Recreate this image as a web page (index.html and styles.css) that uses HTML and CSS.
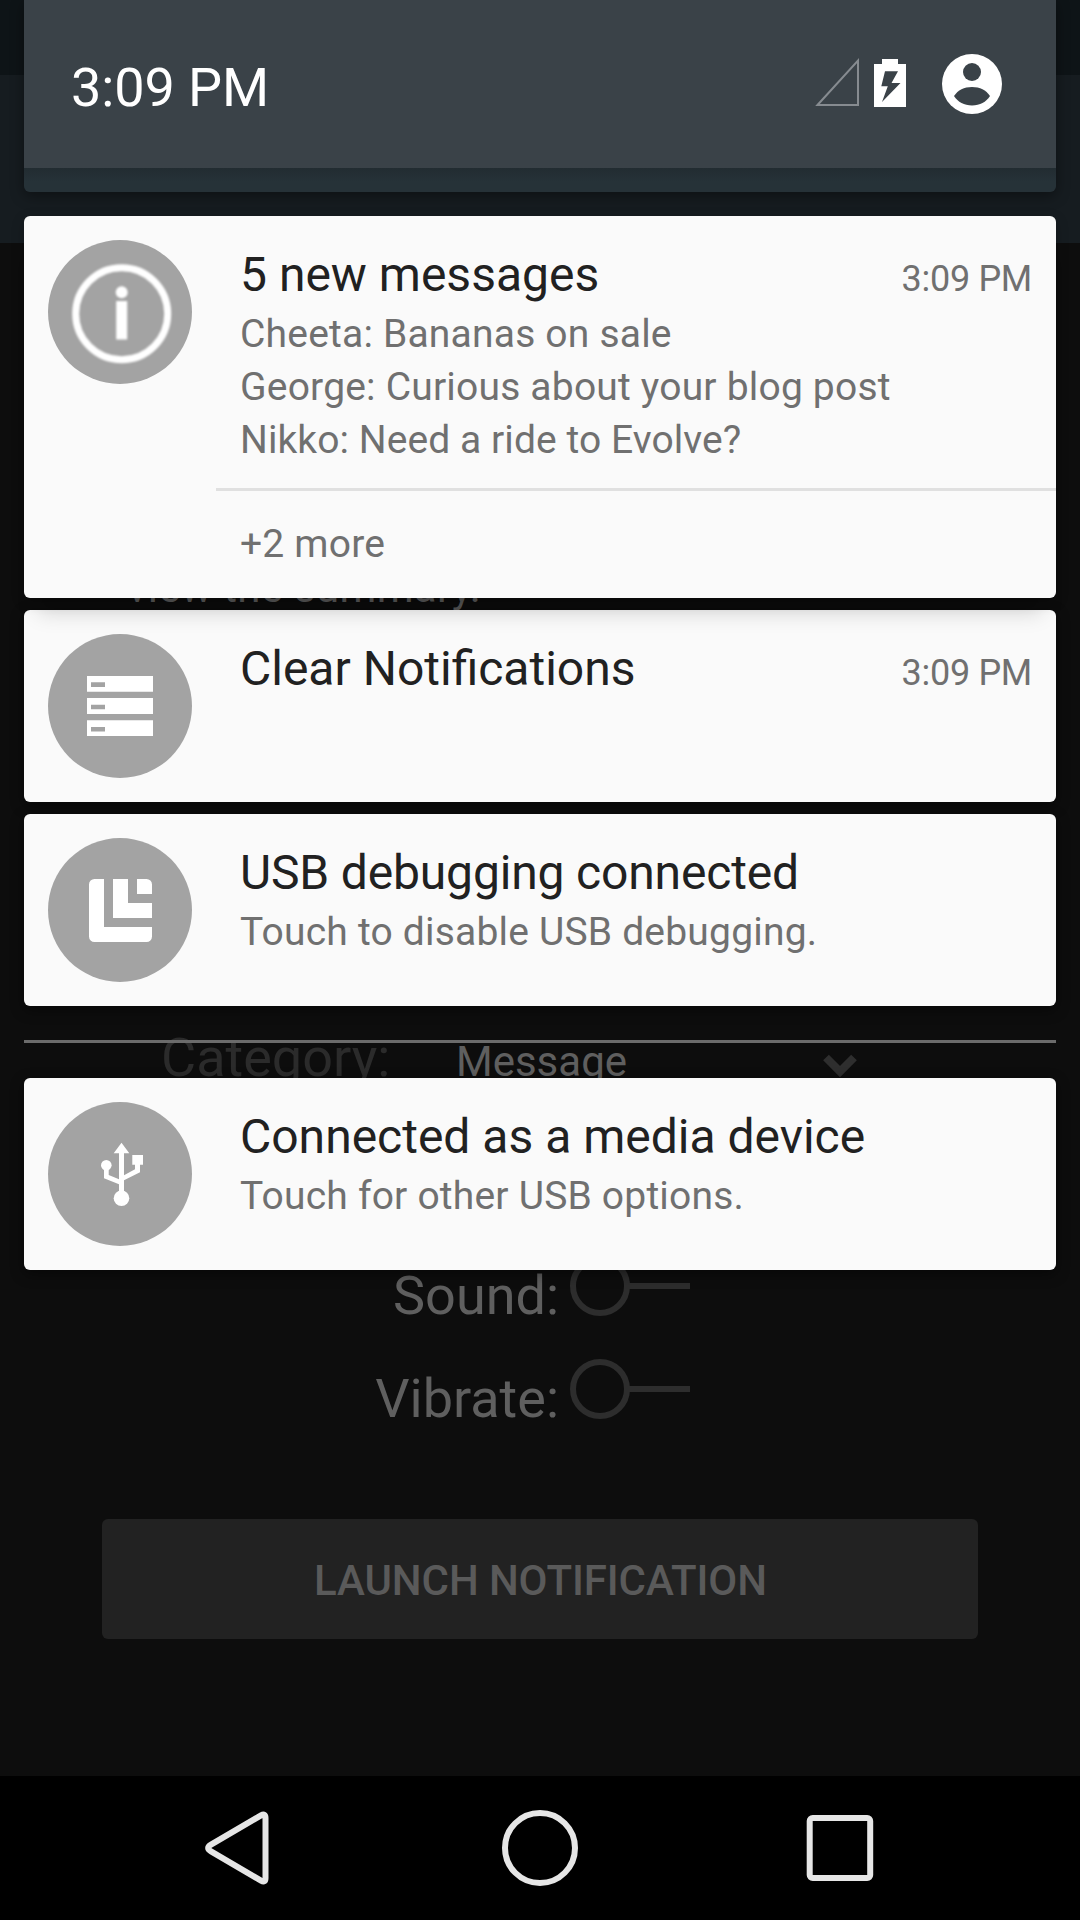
FILE: index.html
```html
<!DOCTYPE html>
<html lang="en">
<head>
<meta charset="utf-8">
<title>Notifications</title>
<link rel="stylesheet" href="styles.css">
</head>
<body>
<div class="screen">
  <main class="app">
    <div class="app-status"></div>
    <div class="app-toolbar"></div>
    <div class="app-content">
      <p class="hint">view the summary.</p>
      <div class="field">
        <span class="label label-dim">Category:</span>
        <span class="select">Message</span>
        <svg class="chevron" viewBox="0 0 34 24"><path d="M3 3.500L17 17.500L31 3.500" fill="none" stroke="#2e2e2e" stroke-width="8"/></svg>
      </div>
      <div class="toggle">
        <span class="label">Sound:</span>
        <svg class="switch" viewBox="0 0 120 60"><circle cx="30" cy="30" r="27"/><path d="M57 30H120"/></svg>
      </div>
      <div class="toggle">
        <span class="label">Vibrate:</span>
        <svg class="switch" viewBox="0 0 120 60"><circle cx="30" cy="30" r="27"/><path d="M57 30H120"/></svg>
      </div>
      <button class="launch">LAUNCH NOTIFICATION</button>
    </div>
    <nav class="navbar">
      <svg class="nav-icon" viewBox="0 0 90 90"><path d="M16 41.700L66 12.400Q70.500 9.800 70.500 15V75Q70.500 80.200 66 77.600L16 48.300Q10.300 45 16 41.700Z"/></svg>
      <svg class="nav-icon" viewBox="0 0 90 90"><circle cx="45" cy="45" r="35"/></svg>
      <svg class="nav-icon" viewBox="0 0 90 90"><rect x="14.700" y="15" width="60.500" height="60" rx="3"/></svg>
    </nav>
  </main>

  <section class="shade">
    <header class="quick">
      <div class="quick-bar">
        <span class="clock">3:09 PM</span>
        <svg class="signal" viewBox="0 0 44 48"><path d="M2.500 47L43 2.700V47Z" fill="none" stroke="#868b90" stroke-width="2"/></svg>
        <svg class="battery" viewBox="0 0 32 48"><path fill="#fff" fill-rule="evenodd" d="M8 0H24V5H32V48H0V5H8ZM11 12.300L7.300 27.300H13.800L8 43L26.500 24H17.500L24 12.300Z"/></svg>
        <svg class="user" viewBox="0 0 60 60"><circle cx="30" cy="30" r="30" fill="#fff"/><circle cx="30" cy="18" r="9" fill="#3a4248"/><path d="M12 42C16 36 22 33 30 33S44 36 48 42C44 48 38 51.500 30 51.500S16 48 12 42Z" fill="#3a4248"/></svg>
      </div>
    </header>

    <article class="card card-inbox">
      <svg class="avatar" viewBox="0 0 144 144"><circle cx="72" cy="72" r="72"/><g class="soft"><circle cx="73.700" cy="73.700" r="46" fill="none" stroke="#fff" stroke-width="7"/><circle cx="73.700" cy="52.300" r="6" fill="#fff"/><path d="M68.200 61H79.200V99.500H68.200Z" fill="#fff"/></g></svg>
      <div class="card-body">
        <div class="card-head"><h2>5 new messages</h2><time>3:09 PM</time></div>
        <p>Cheeta: Bananas on sale</p>
        <p>George: Curious about your blog post</p>
        <p class="even">Nikko: Need a ride to Evolve?</p>
        <div class="more">+2 more</div>
      </div>
    </article>

    <article class="card">
      <svg class="avatar" viewBox="0 0 144 144"><circle cx="72" cy="72" r="72"/><path fill="#fff" fill-rule="evenodd" d="M39 42H105V57.700H39ZM43 48.300V53H57V48.300ZM39 64H105V80H39ZM43 70.700V75.300H57V70.700ZM39 86.300H105V102H39ZM43 93V97.500H57V93Z"/></svg>
      <div class="card-body">
        <div class="card-head"><h2>Clear Notifications</h2><time>3:09 PM</time></div>
      </div>
    </article>

    <article class="card">
      <svg class="avatar" viewBox="0 0 144 144"><circle cx="72" cy="72" r="72"/><path fill="#fff" d="M46 41H56V89H104V98.500A5.500 5.500 0 0 1 98.500 104H46.500A5.500 5.500 0 0 1 41 98.500V46.500A5.500 5.500 0 0 1 46.500 41ZM65 41H80V65H104V80H65ZM89 41H98.500A5.500 5.500 0 0 1 104 46.500V56H89Z"/></svg>
      <div class="card-body">
        <div class="card-head"><h2 class="tight">USB debugging connected</h2></div>
        <p>Touch to disable USB debugging.</p>
      </div>
    </article>

    <div class="divider"></div>

    <article class="card">
      <svg class="avatar" viewBox="0 0 144 144"><circle cx="72" cy="72" r="72"/><g fill="#fff"><path d="M73.500 40.700L81.300 51.300H76V73.300L87 67.300V62.700H84.300V53H95V62.700H92V70.300L76 78.300V92H71V82.300L56 76.300V66H60.700V73L71 77.300V51.300H65.700Z"/><circle cx="73.500" cy="96.300" r="7.800"/><circle cx="58.300" cy="63.300" r="5.300"/></g></svg>
      <div class="card-body">
        <div class="card-head"><h2>Connected as a media device</h2></div>
        <p>Touch for other USB options.</p>
      </div>
    </article>
  </section>
</div>
</body>
</html>
```
FILE: styles.css
```css
* { box-sizing: border-box; }

body {
  margin: 0;
  background: #000;
  font-family: Roboto, "Liberation Sans", sans-serif;
}

h2, p { margin: 0; font-weight: 400; }

.screen {
  position: relative;
  width: 1080px;
  height: 1920px;
  overflow: hidden;
}

/* Dimmed app behind the shade */
.app {
  display: flex;
  flex-direction: column;
  height: 100%;
  background: #0d0d0d;
}

.app-status { height: 75px; background: #0e1417; }
.app-toolbar { height: 168px; background: #161c20; }

.app-content {
  flex: 1;
  display: flex;
  flex-direction: column;
}

.hint {
  margin: 317px 0 0 127px;
  font-size: 42px;
  line-height: 56px;
  letter-spacing: .3px;
  color: #5f5f5f;
}

.field {
  display: flex;
  align-items: baseline;
  margin-top: 410px;
  padding-left: 161px;
  height: 64px;
}

.label { font-size: 54px; line-height: 64px; color: #5f5f5f; }
.label-dim { width: 295px; color: #2b2b2b; }
.select { width: 367px; font-size: 42px; color: #5f5f5f; }
.chevron { align-self: flex-start; width: 34px; height: 24px; margin-top: 28px; }

.toggle {
  display: grid;
  grid-template-columns: 559px 120px;
  column-gap: 11px;
  height: 103px;
  align-items: start;
}
.field + .toggle { margin-top: 174px; }
.toggle .label { text-align: right; }

.switch {
  width: 120px;
  height: 60px;
  margin-top: -8px;
  fill: none;
  stroke: #2d2d2d;
  stroke-width: 6;
}

.launch {
  width: 876px;
  height: 120px;
  margin: 49px 0 0 102px;
  padding: 4px 0 0 1px;
  border: 0;
  border-radius: 6px;
  background: #222;
  color: #5a5a5a;
  font: 500 42px/50px Roboto, "Liberation Sans", sans-serif;
  letter-spacing: -.1px;
}

.navbar {
  display: flex;
  height: 144px;
  padding: 27px 195px 0;
  justify-content: space-between;
  background: #000;
}
.nav-icon {
  width: 90px;
  height: 90px;
  fill: none;
  stroke: #e6e6e6;
  stroke-width: 6;
}

/* Notification shade, lying over the app */
.shade {
  position: absolute;
  inset: 0 24px auto;
  display: flex;
  flex-direction: column;
  gap: 12px;
}

.quick {
  height: 192px;
  margin-bottom: 12px;
  background: linear-gradient(#222c31 168px, #263238 182px);
  border-radius: 0 0 6px 6px;
  box-shadow: 0 4px 14px rgba(0, 0, 0, .4);
}

.quick-bar {
  display: flex;
  align-items: flex-start;
  height: 168px;
  padding: 54px 54px 0 47px;
  background: #3a4248;
}
.clock {
  flex: 1;
  font-size: 54px;
  line-height: 64px;
  letter-spacing: -.1px;
  color: #fff;
  margin-top: 2px;
}
.signal { width: 44px; height: 48px; margin: 4px 15px 0 0; }
.battery { width: 32px; height: 48px; margin: 5px 36px 0 0; }
.user { width: 60px; height: 60px; }

.card {
  display: flex;
  gap: 48px;
  height: 192px;
  padding: 24px;
  background: #fafafa;
  border-radius: 6px;
  box-shadow: 0 4px 14px rgba(0, 0, 0, .45);
}
.card-inbox {
  position: relative;
  z-index: 1;
  height: 382px;
  box-shadow: 0 4px 14px rgba(0, 0, 0, .2), 0 29px 20px -14px rgba(0, 0, 0, .15);
}

.avatar { flex: none; width: 144px; height: 144px; fill: #a3a3a3; }
.soft { filter: blur(.8px); }

.card-body { flex: 1; padding-top: 7px; }
.card-head {
  display: flex;
  justify-content: space-between;
  align-items: baseline;
  height: 61px;
}
h2 { font-size: 48px; line-height: 56px; color: #212121; }
.tight { letter-spacing: -.16px; }
time { font-size: 36px; line-height: 42px; letter-spacing: -.3px; color: #707070; }

.card p, .more { font-size: 39px; line-height: 53px; letter-spacing: .2px; color: #707070; }
.card .even { letter-spacing: .08px; }

.more {
  margin: 21px -24px 0;
  padding: 27px 24px 0;
  border-top: 3px solid #e0e0e0;
}

.divider { height: 3px; margin: 22px 0 23px; background: #6b6b6b; }
```
